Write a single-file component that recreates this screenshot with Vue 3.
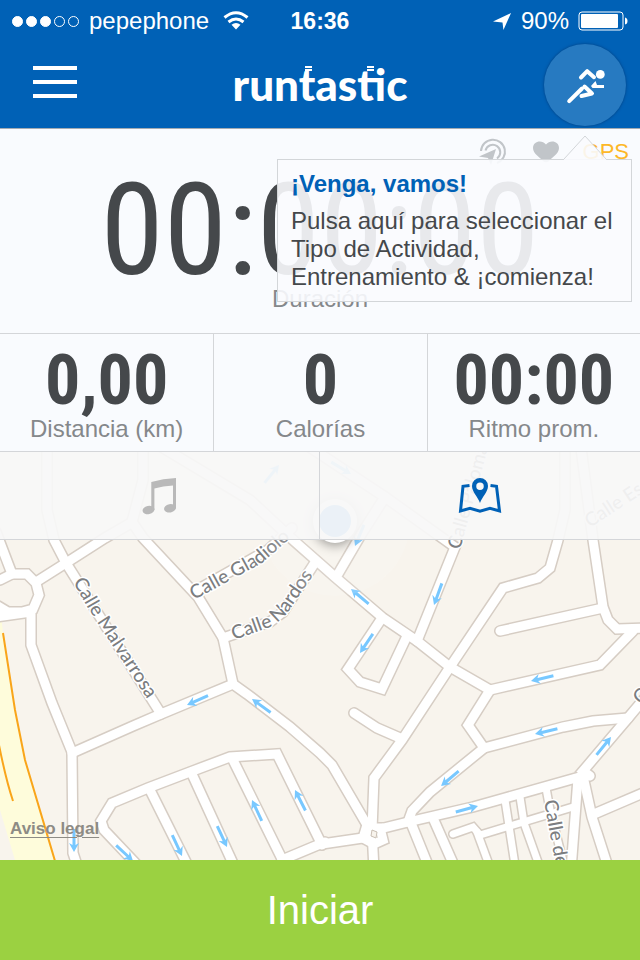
<template>
    <div class="screen">
        <header class="topbar">
            <div class="status">
                <div class="carrier">
                    <span class="signal">
                        <i v-for="dot in 5" :key="dot" class="dot" :class="{ filled : dot <= signal }"></i>
                    </span>
                    <span>pepephone</span>
                    <svg class="wifi" viewBox="0 0 26 20" aria-hidden="true">
                        <path d="M1.500 6.500Q13 -3 24.500 6.500" />
                        <path d="M5.500 11Q13 5 20.500 11" />
                        <path class="solid" d="M13 18.500L8.500 13.800Q13 10.200 17.500 13.800Z" />
                    </svg>
                </div>
                <strong class="clock">16:36</strong>
                <div class="power">
                    <svg class="location" viewBox="0 0 20 20" aria-hidden="true">
                        <path d="M19 1L0 10L10 11L11 19Z" />
                    </svg>
                    <span>90%</span>
                    <svg class="battery" viewBox="0 0 50 20" aria-hidden="true">
                        <rect x="1" y="1" width="44" height="18" rx="3" class="shell" />
                        <rect x="3" y="3" width="37" height="14" rx="1" />
                        <path d="M47 6.500Q49.500 7 49.500 10T47 13.500Z" />
                    </svg>
                </div>
            </div>
            <div class="nav">
                <button class="menu" aria-label="Menú">
                    <span></span>
                    <span></span>
                    <span></span>
                </button>
                <svg class="brand" viewBox="0 0 184 44">
                    <text x="92" y="38" text-anchor="middle">runtastic</text>
                    <path d="M77 4h7M77 7h7M139 4h7M139 7h7" />
                </svg>
                <button class="activity" aria-label="Tipo de Actividad">
                    <svg viewBox="544 44 82 82" aria-hidden="true">
                        <circle cx="600.300" cy="74.400" r="4.400" />
                        <path class="limb" d="M581 77.500L587.200 71.200L594 77.200M569.200 101.200L582 88.500M584.500 86.500L592 93.500L581.500 96" />
                        <path d="M591 86L595.500 81L597 85L604 85V88H592.500Z" />
                    </svg>
                </button>
            </div>
        </header>

        <section class="duration">
            <div class="sensors">
                <svg class="live" viewBox="0 0 28 28" aria-hidden="true">
                    <path class="ring" d="M2 13A12 12 0 1 1 18 25M6.500 12.500A7.500 7.500 0 1 1 18 20.500" />
                    <path d="M17 11L0 18.500L9 20L12 27Z" />
                </svg>
                <svg class="heart" viewBox="0 0 26 22" aria-hidden="true">
                    <path d="M13 3.500C9 -1.500 0 0 0 7C0 13 7 16 10 20Q13 22.500 16 20C19 16 26 13 26 7C26 0 17 -1.500 13 3.500Z" />
                </svg>
                <span class="gps">GPS</span>
            </div>
            <div class="timer">00:00:00</div>
            <div class="label">Duración</div>

            <div class="tip">
                <svg class="pointer" viewBox="0 0 42 25" aria-hidden="true">
                    <path d="M0 24L21 1L42 24V25H0Z" />
                    <path class="edge" d="M0 24L21 1L42 24" />
                </svg>
                <h2>¡Venga, vamos!</h2>
                <p>Pulsa aquí para seleccionar el<br>Tipo de Actividad,<br>Entrenamiento &amp; ¡comienza!</p>
            </div>
        </section>

        <section class="stats">
            <div v-for="stat in stats" :key="stat.label" class="stat">
                <div class="value">{{ stat.value }}</div>
                <div class="label">{{ stat.label }}</div>
            </div>
        </section>

        <main class="map">
            <svg class="streets" viewBox="0 452 640 408" preserveAspectRatio="xMidYMin slice" aria-hidden="true">
                <path class="highway" d="M-2 590L3 633L15 710L25 760L55 860H15L0 810Z" />
                <path class="highway-edge" d="M3 633L15 710L25 760L55 861M-1 745Q6 780 13 801" />

                <path v-for="(road, i) in roads" :key="'c' + i" :d="road" class="casing" />
                <path v-for="(road, i) in lanes" :key="'lc' + i" :d="road" class="casing thin" />
                <path v-for="(road, i) in roads" :key="'r' + i" :d="road" class="road" />
                <path v-for="(road, i) in lanes" :key="'lr' + i" :d="road" class="road thin" />
                <path class="island" d="M372 830L377 832L376 838L371 836Z" />

                <path
                    v-for="(arrow, i) in arrows" :key="'a' + i"
                    class="arrow"
                    d="M-23 -1.500H-7L-9 -5L0 0L-9 5L-7 1.500H-23Z"
                    :transform="arrowTransform(arrow)"
                />

                <text v-for="name in streetNames" :key="name.id" class="street">
                    <textPath :href="'#' + name.id">{{ name.text }}</textPath>
                </text>
                <defs>
                    <path v-for="name in streetNames" :key="name.id" :id="name.id" :d="name.d" />
                </defs>

                <circle class="accuracy" cx="335" cy="521" r="75" />
                <circle class="me-ring" cx="335" cy="521" r="22" />
                <circle class="me" cx="335" cy="521" r="16" />
            </svg>

            <nav class="tabs">
                <button class="tab" aria-label="Música">
                    <svg class="music" viewBox="141 477 35 38" aria-hidden="true">
                        <ellipse cx="147.500" cy="510" rx="6" ry="4.200" transform="rotate(-12 147.500 510)" />
                        <ellipse cx="169" cy="508.300" rx="6" ry="4.200" transform="rotate(-12 169 508.300)" />
                        <path d="M150.300 482Q162 478.500 175 478V508.500H172V485.500Q162 486 153.400 488.500V510H150.300Z" />
                    </svg>
                </button>
                <button class="tab" aria-label="Mapa">
                    <svg class="mapicon" viewBox="458 476 44 38" aria-hidden="true">
                        <path class="sheet" d="M469.500 484.500L463 485.300L460.500 510L470 507.200L480 510.300L490 507.200L499.500 510L496.500 485.300L490.500 484.500" />
                        <path fill-rule="evenodd" d="M480 502C478 496 472 491 472 485A8 8 0 0 1 488 485C488 491 482 496 480 502ZM480 481.500A3.700 3.700 0 1 0 480 489A3.700 3.700 0 1 0 480 481.500Z" />
                    </svg>
                </button>
            </nav>

            <a class="legal" href="#legal">Aviso legal</a>
        </main>

        <button class="start">Iniciar</button>
    </div>
</template>

<script setup>
import { ref } from 'vue';

const signal = ref(3);

const stats = ref([
    { value: '0,00', label: 'Distancia (km)' },
    { value: '0', label: 'Calorías' },
    { value: '00:00', label: 'Ritmo prom.' }
]);

const roads = [
    // roundabout on the left and its exits
    'M0 580L12 574L27 574L36 583L39 595L33 609L22 612L8 612L-2 606',
    'M-4 532L12 574',
    'M-4 617L31 612L31 645L52 703L72 752L73 853L82 880',
    'M36 582L66 563L105 538L131 523',
    'M47 440L47 510L54 540L66 563L161 714',
    'M143 440L143 480L132 522L143 538L198 597L223 638L233 684',
    'M72 753L133 726L161 714L233 684L247 694L290 727L320 753L332 765L370 830',
    // main diagonal
    'M150 440L250 500L293 540L335 577L383 618L417 641L450 667L490 690',
    'M197 590L268 550L292 528',
    'M223 638L270 622L283 612L316 561',
    'M338 574L362 533L385 497',
    'M290 434L385 497L455 547L417 641',
    'M382 618L348 669L360 682L382 689L407 636',
    'M565 440L565 510L558 540L550 568L538 578L503 588L450 667L402 740L374 778L372 830L374 870',
    'M580 440L593 540L603 607L608 620L617 629L650 628',
    'M603 608L500 631',
    'M490 690L600 665L633 631',
    'M490 690L468 725L484 748',
    'M408 822L412 811L430 792L484 748L563 727L593 721L628 718',
    'M650 692L628 718L583 771L590 776',
    'M354 713L377 728L400 738',
    'M322 844L363 838L372 831L408 822L473 807L505 798L583 776',
    'M366 828L380 828L383 840L374 844L363 838Z',
    'M578 778L571 870',
    'M583 776L592 817L609 870',
    'M594 814L650 790',
    'M411 823L430 870',
    'M433 818L456 870',
    // block in the lower left
    'M322 845L277 754L230 757L190 772L148 788L112 803L101 821L104 830L140 868',
    'M233 760L284 863',
    'M192 774L236 870',
    'M150 790L190 870',
    'M282 860L325 842'
];

const lanes = [
    'M453 834L473 827L480 835L573 807',
    'M477 832L491 870',
    'M505 800L515 865',
    'M520 797L524 823L539 865',
    'M546 788L550 810L564 865'
];

// tail x, tail y, head x, head y
const arrows = [
    [209, 695, 187, 705],
    [270, 712, 252, 699],
    [369, 604, 351, 589],
    [442, 583, 434, 605],
    [373, 634, 360, 653],
    [361, 532, 355, 546],
    [553, 676, 531, 681],
    [557, 729, 535, 734],
    [597, 754, 611, 737],
    [459, 771, 441, 786],
    [456, 812, 478, 806],
    [262, 821, 252, 800],
    [305, 810, 295, 790],
    [172, 835, 182, 856],
    [217, 826, 227, 847],
    [117, 846, 133, 861],
    [74, 828, 74, 852],
    [267, 480, 279, 465],
    [333, 463, 351, 474]
];

const arrowTransform = ([x1, y1, x2, y2]) => {
    const angle = Math.round(Math.atan2(y2 - y1, x2 - x1) * 180 / Math.PI);
    return `translate(${x2} ${y2}) rotate(${angle})`;
}

const streetNames = [
    { id: 'malvarrosa', text: 'Calle Malvarrosa', d: 'M73 582L88 608L170 734' },
    { id: 'gladiolo', text: 'Calle Gladiolo', d: 'M194 600L262 563L320 512' },
    { id: 'nardos', text: 'Calle Nardos', d: 'M234 640L270 627Q284 619 292 606L340 536' },
    { id: 'paloma', text: 'Calle Paloma', d: 'M460 550L490 440' },
    { id: 'esparto', text: 'Calle Esparto', d: 'M590 528L660 482' },
    { id: 'delsol', text: 'Calle del Sol', d: 'M544 801L562 900' },
    { id: 'cala', text: 'Calle', d: 'M640 705L690 660' }
];
</script>

<style>
body {
    margin: 0;
}
</style>

<style scoped>
.screen {
    display: flex;
    flex-direction: column;
    min-height: 100vh;
    font-family: "Liberation Sans", Arial, sans-serif;
    background-color: #f9fbfe;
    color: #45484b;
}

button {
    border: none;
    padding: 0;
    background: none;
    font-family: inherit;
    cursor: pointer;
}

svg {
    display: block;
}

.topbar {
    height: 128px;
    background-color: #0061b6;
    border-bottom: 1px solid #a3abb3;
    color: #fff;
}

.status {
    display: grid;
    grid-template-columns: 1fr auto 1fr;
    align-items: center;
    height: 42px;
    padding: 0 12px;
    font-size: 24px;
    line-height: 28px;
}

.carrier, .power {
    display: flex;
    align-items: center;
}

.carrier {
    gap: 10px;
}

.power {
    gap: 9px;
    justify-content: flex-end;
}

.signal {
    display: flex;
    gap: 3px;
}

.dot {
    box-sizing: border-box;
    width: 11px;
    height: 11px;
    border: 1px solid #fff;
    border-radius: 50%;
}

.filled {
    background-color: #fff;
}

.clock {
    font-size: 23px;
}

.wifi {
    width: 26px;
    height: 20px;
    margin-left: 4px;
    fill: none;
    stroke: #fff;
    stroke-width: 3;
}

.wifi .solid {
    fill: #fff;
    stroke: none;
}

.location {
    width: 19px;
    height: 19px;
    fill: #fff;
}

.battery {
    width: 50px;
    height: 20px;
    fill: #fff;
}

.shell {
    fill: none;
    stroke: #fff;
}

.nav {
    display: grid;
    grid-template-columns: 1fr auto 1fr;
    align-items: center;
    height: 86px;
    padding: 0 14px;
}

.menu {
    display: flex;
    flex-direction: column;
    gap: 10px;
    width: 44px;
    margin-left: 19px;
    padding-bottom: 6px;
}

.menu span {
    height: 4px;
    background-color: #fff;
}

.brand {
    width: 184px;
    height: 44px;
}

.brand text {
    font-family: Lato, sans-serif;
    font-weight: 900;
    font-size: 44px;
    fill: #fff;
}

.brand path {
    stroke: #fff;
    stroke-width: 2;
}

.activity {
    justify-self: end;
    width: 82px;
    height: 82px;
    border-radius: 50%;
    background-color: #277ac1;
    box-shadow: 0 0 3px rgba(0, 40, 90, .6);
}

.activity svg {
    fill: #fff;
}

.limb {
    fill: none;
    stroke: #fff;
    stroke-width: 4;
    stroke-linecap: round;
    stroke-linejoin: round;
}

.duration {
    position: relative;
    height: 204px;
    text-align: center;
}

.sensors {
    display: flex;
    justify-content: flex-end;
    align-items: center;
    height: 46px;
    padding-right: 11px;
    fill: #c1c5c9;
}

.live {
    width: 28px;
    height: 28px;
    margin-right: 26px;
}

.ring {
    fill: none;
    stroke: #c1c5c9;
    stroke-width: 2;
}

.heart {
    width: 26px;
    height: 22px;
    margin-right: 24px;
}

.gps {
    font-size: 22px;
    color: #fdb827;
}

.timer {
    height: 110px;
    line-height: 110px;
    font-family: "Roboto Condensed", "Liberation Sans", sans-serif;
    font-size: 128px;
    white-space: nowrap;
}

.label {
    font-size: 24px;
    line-height: 28px;
    color: #85888b;
}

.tip {
    position: absolute;
    z-index: 1;
    top: 30px;
    right: 8px;
    box-sizing: border-box;
    width: 355px;
    height: 143px;
    padding: 10px 13px;
    border: 1px solid #d3d6d9;
    background-color: rgba(249, 251, 254, .9);
    text-align: left;
    font-size: 24px;
    line-height: 28px;
}

.tip h2 {
    margin: 0 0 9px;
    font-size: 24px;
    line-height: 28px;
    color: #0061b6;
}

.tip p {
    margin: 0;
    white-space: nowrap;
}

.pointer {
    position: absolute;
    top: -25px;
    right: 25px;
    width: 42px;
    height: 25px;
    fill: rgba(249, 251, 254, .9);
}

.edge {
    fill: none;
    stroke: #d3d6d9;
}

.stats {
    display: grid;
    grid-template-columns: repeat(3, 1fr);
    border-top: 1px solid #d4d6d9;
    border-bottom: 1px solid #d4d6d9;
}

.stat {
    height: 117px;
    text-align: center;
}

.stat + .stat {
    border-left: 1px solid #d4d6d9;
}

.value {
    height: 81px;
    line-height: 92px;
    font-family: "Roboto Condensed", "Liberation Sans", sans-serif;
    font-weight: bold;
    font-size: 70px;
}

.map {
    position: relative;
    flex: 1;
    min-height: 408px;
    background-color: #f8f4ed;
}

.streets {
    position: absolute;
    width: 100%;
    height: 100%;
}

.highway {
    fill: #fefcdb;
}

.highway-edge {
    fill: none;
    stroke: #f9a51a;
    stroke-width: 2;
}

.casing, .road {
    fill: none;
    stroke-linecap: round;
}

.casing {
    stroke: #d6cdc4;
    stroke-width: 12;
}

.road {
    stroke: #fff;
    stroke-width: 9;
}

.casing.thin {
    stroke-width: 10;
}

.road.thin {
    stroke-width: 7;
}

.island {
    fill: #f8f4ed;
    stroke: #c9bfb4;
}

.arrow {
    fill: #78c8ff;
}

.street {
    font-family: Lato, sans-serif;
    font-weight: 500;
    font-size: 19px;
    fill: #7b7d80;
    stroke: #fff;
    stroke-width: 3;
    paint-order: stroke;
}

.accuracy {
    fill: rgba(255, 255, 255, .12);
}

.me-ring {
    fill: #fff;
    filter: drop-shadow(0 2px 6px rgba(0, 0, 0, .4));
}

.me {
    fill: #4aa0ee;
}

.tabs {
    position: relative;
    display: grid;
    grid-template-columns: 1fr 1fr;
    height: 87px;
    border-bottom: 1px solid #d4d6d9;
    background-color: rgba(247, 247, 247, .93);
}

.tab {
    display: flex;
    justify-content: center;
    align-items: center;
}

.tab:first-child {
    border-right: 1px solid #d4d6d9;
}

.music {
    width: 35px;
    height: 38px;
    fill: #b9b9b9;
}

.mapicon {
    width: 44px;
    height: 38px;
    fill: #0061b6;
}

.sheet {
    fill: none;
    stroke: #0061b6;
    stroke-width: 3;
}

.legal {
    position: absolute;
    left: 10px;
    bottom: 20px;
    font-size: 17px;
    font-weight: bold;
    line-height: 22px;
    color: #8d8b85;
    text-decoration-thickness: 1px;
    text-underline-offset: 3px;
}

.start {
    height: 100px;
    background-color: #9bd141;
    color: #fff;
    font-size: 40px;
}
</style>
